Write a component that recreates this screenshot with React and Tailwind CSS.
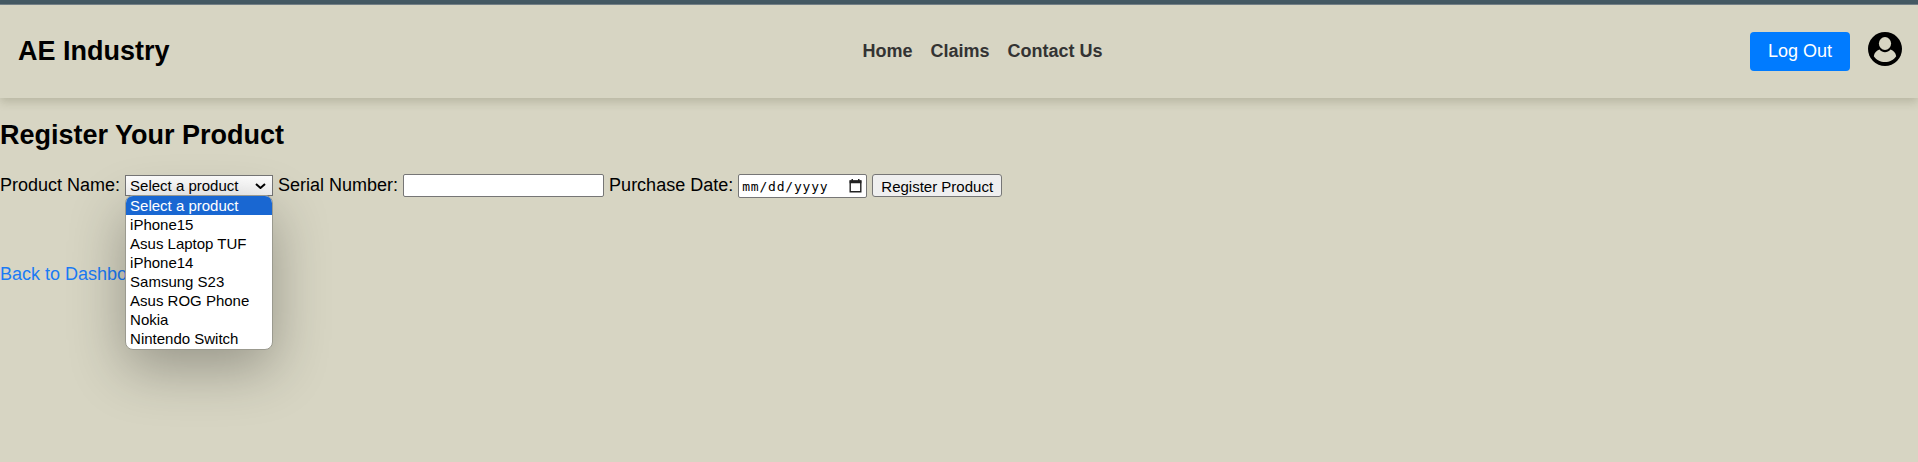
const products = ["Select a product", "iPhone15", "Asus Laptop TUF", "iPhone14", "Samsung S23", "Asus ROG Phone", "Nokia", "Nintendo Switch"];

function AccountIcon() {
  return (
    <svg className="ml-[18px] h-[34px] w-[34px]" viewBox="0 0 34 34">
      <circle cx="17" cy="17" r="17" fill="#000" />
      <path d="M11.5 17.6 C13 19.400 15 20.3 17 20.3 C19 20.3 21 19.4 22.5 17.6 C25.500 18.4 27.7 21 28.2 24.2 C25.8 28 21.5 30 17 30 C12.5 30 8.2 28 5.8 24.2 C6.3 21 8.5 18.4 11.5 17.6 Z" fill="#d7d5c3" />
      <ellipse cx="17" cy="11.5" rx="6.9" ry="7.5" fill="#000" />
      <ellipse cx="17" cy="11.5" rx="6.1" ry="6.5" fill="#d7d5c3" />
    </svg>
  );
}

function Header() {
  return (
    <header className="flex h-[93px] items-start justify-between pl-[18px] pr-4 pt-[27px] shadow-[0_4px_9px_rgba(60,60,30,0.2)]">
      <h1 className="mt-1 w-[445px] text-[27px] leading-[31px] font-bold">AE Industry</h1>
      <nav className="mt-[9px] flex gap-[18px] text-[18px] leading-[20px] font-bold text-[#333]">
        <a>Home</a>
        <a>Claims</a>
        <a>Contact Us</a>
      </nav>
      <div className="flex w-[400px] items-start justify-end">
        <button className="h-[39px] w-[100px] rounded-[4px] bg-[#007bff] text-[18px] leading-[39px] text-white">Log Out</button>
        <AccountIcon />
      </div>
    </header>
  );
}

function ProductSelect() {
  return (
    <div className="relative mt-px ml-[5px] h-[21px] w-[148px] border border-[#767676] bg-linear-to-b from-white to-[#f4f4f4] text-[15px]">
      <div className="flex h-[19px] items-center justify-between pr-[6px] pl-[4px]">
        <span className="mt-px leading-[20px]">Select a product</span>
        <svg className="h-[6px] w-[11px]" viewBox="0 0 11 6">
          <path d="M1 1 L5.5 5 L10 1" fill="none" stroke="#000" strokeWidth="2" />
        </svg>
      </div>
      <ul className="absolute top-[19px] -left-px z-10 h-[155px] w-[148px] overflow-hidden rounded-[8px] border border-[#9b9a8f] bg-white shadow-[0_18px_56px_rgba(0,0,0,0.3)]">
        {products.map((name, i) => (
          <li key={name} className={i === 0 ? "h-[19px] bg-[#1967d2] pl-[4px] leading-[19px] text-white" : "h-[19px] pl-[4px] leading-[19px]"}>
            {name}
          </li>
        ))}
      </ul>
    </div>
  );
}

export default function App() {
  return (
    <div className="h-[462px] overflow-hidden bg-[#d7d5c3] font-['Liberation_Sans',Arial,sans-serif] text-black">
      <div className="h-[5px] border-b border-[#74828a] bg-[#455a64]" />
      <Header />
      <main>
        <h2 className="mt-[22px] text-[27px] leading-[31px] font-bold">Register Your Product</h2>
        <form className="mt-[23px] flex h-6 items-start text-[18px] leading-[22px] whitespace-nowrap">
          <label>Product Name:</label>
          <ProductSelect />
          <label className="ml-[5px]">Serial Number:</label>
          <div className="ml-[5px] h-[23px] w-[201px] rounded-[2px] border border-[#767676] bg-white" />
          <label className="ml-[5px]">Purchase Date:</label>
          <div className="ml-[5px] flex h-6 w-[129px] items-center justify-between rounded-[2px] border border-[#767676] bg-white pr-[4px] pl-[3px]">
            <span className="mt-[2px] font-['DejaVu_Sans_Mono',monospace] text-[13px] tracking-[0.8px]">mm/dd/yyyy</span>
            <svg className="h-[14px] w-[13px]" viewBox="0 0 13 14">
              <path d="M1.2 2 H11.8 V12.8 H1.2 Z" fill="none" stroke="#222" strokeWidth="1.4" />
              <path d="M0.6 1.4 H12.4 V4.2 H0.6 Z M2.500 0 H4 V2 H2.500 Z M9 0 H10.500 V2 H9 Z" fill="#222" />
            </svg>
          </div>
          <div className="ml-[5px] h-[23px] w-[130px] rounded-[3px] border border-[#767676] bg-[#efefef] text-center text-[15px] leading-[23px]">Register Product</div>
        </form>
        <a className="mt-[65px] block text-[18px] leading-[22px] text-[#1a7bf5]">Back to Dashboard</a>
      </main>
    </div>
  );
}
